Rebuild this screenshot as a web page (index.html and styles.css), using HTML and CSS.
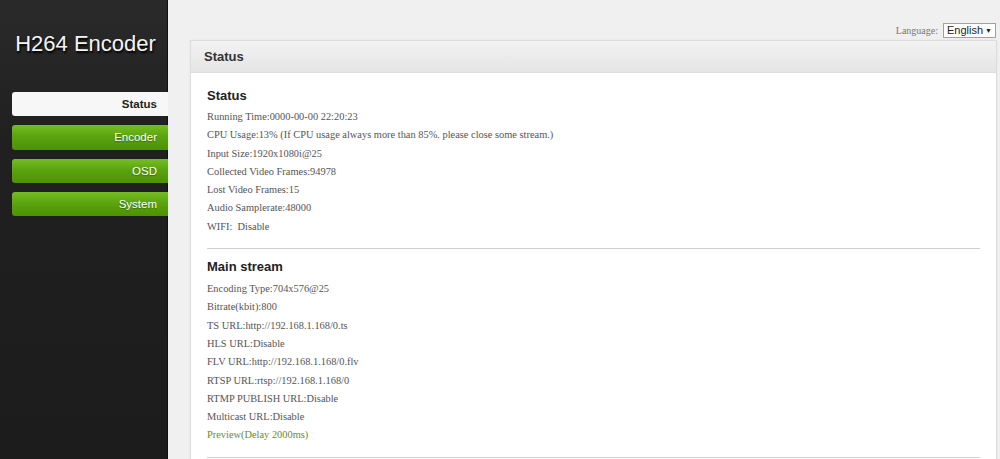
FILE: index.html
```html
<!DOCTYPE html>
<html lang="en">
<head>
  <meta charset="UTF-8" />
  <title>H264 Encoder</title>
  <link rel="stylesheet" href="styles.css">
</head>
<body>
  <div class="layout">
    <aside class="sidebar">
      <h1 class="brand">H264 Encoder</h1>
      <nav class="menu">
        <a class="menu-item active" href="#">Status</a>
        <a class="menu-item" href="#">Encoder</a>
        <a class="menu-item" href="#">OSD</a>
        <a class="menu-item" href="#">System</a>
      </nav>
    </aside>

    <main class="main">
      <div class="lang-bar">
        <span class="lang-label">Language:</span>
        <div class="lang-select">English <span class="arrow">&#9660;</span></div>
      </div>

      <section class="panel">
        <div class="panel-head">Status</div>
        <div class="panel-body">
          <h3>Status</h3>
          <p>Running Time:0000-00-00 22:20:23</p>
          <p>CPU Usage:13% (If CPU usage always more than 85%. please close some stream.)</p>
          <p>Input Size:1920x1080i@25</p>
          <p>Collected Video Frames:94978</p>
          <p>Lost Video Frames:15</p>
          <p>Audio Samplerate:48000</p>
          <p>WIFI: &nbsp;Disable</p>
          <hr>
          <h3>Main stream</h3>
          <p>Encoding Type:704x576@25</p>
          <p>Bitrate(kbit):800</p>
          <p>TS URL:http://192.168.1.168/0.ts</p>
          <p>HLS URL:Disable</p>
          <p>FLV URL:http://192.168.1.168/0.flv</p>
          <p>RTSP URL:rtsp://192.168.1.168/0</p>
          <p>RTMP PUBLISH URL:Disable</p>
          <p>Multicast URL:Disable</p>
          <p><a class="preview" href="#">Preview(Delay 2000ms)</a></p>
          <hr>
        </div>
      </section>
    </main>
  </div>
</body>
</html>
```
FILE: styles.css
```css
* {
  margin: 0;
  padding: 0;
  box-sizing: border-box;
}

html, body {
  height: 100%;
  overflow: hidden;
}

body {
  background: #f0f0f0;
  font-family: "Liberation Sans", Arial, sans-serif;
}

.layout {
  display: flex;
  min-height: 100%;
}

.sidebar {
  width: 168px;
  flex-shrink: 0;
  background: linear-gradient(#2a2a2a, #202020 30%, #1c1c1c);
  border-right: 1px solid #111;
  padding-top: 31px;
}

.brand {
  font-size: 22px;
  font-weight: normal;
  color: #f4f4f4;
  text-align: center;
  text-shadow: 1px 2px 2px #000;
  line-height: 26px;
  padding-left: 4px;
  margin-bottom: 35px;
}

.menu {
  display: flex;
  flex-direction: column;
  gap: 9px;
  padding-left: 12px;
}

.menu-item {
  display: block;
  height: 24.3px;
  line-height: 24px;
  text-align: right;
  padding-right: 11px;
  font-size: 11.5px;
  color: #fff;
  text-decoration: none;
  border-radius: 3px 0 0 3px;
  background: linear-gradient(#74bd22, #5aa20e 50%, #4d9205);
  text-shadow: 0 1px 1px #3a6a00;
  margin-right: -1px;
}

.menu-item.active {
  background: #f7f7f7;
  color: #222;
  font-weight: bold;
  text-shadow: none;
}

.main {
  flex: 1;
  padding: 22px 3px 0 22px;
}

.lang-bar {
  display: flex;
  justify-content: flex-end;
  align-items: center;
  gap: 5px;
  height: 16px;
  margin-bottom: 2px;
  padding-right: 1px;
}

.lang-label {
  font-family: "Liberation Serif", "Times New Roman", serif;
  font-size: 10px;
  color: #777;
}

.lang-select {
  display: flex;
  align-items: center;
  justify-content: space-between;
  width: 53px;
  height: 15px;
  border: 1px solid #a0a0a0;
  background: #fff;
  font-size: 11px;
  color: #222;
  padding: 0 3px 0 3px;
}

.lang-select .arrow {
  font-size: 7px;
}

.panel {
  background: #fff;
  border: 1px solid #dcdcdc;
  box-shadow: 0 0 2px rgba(0, 0, 0, 0.06);
}

.panel-head {
  height: 32px;
  line-height: 32px;
  padding-left: 13px;
  font-size: 13px;
  font-weight: bold;
  color: #333;
  background: linear-gradient(#f2f2f2, #e5e5e5);
  border-bottom: 1px solid #dedede;
}

.panel-body {
  padding: 15px 16px 0 16px;
}

.panel-body h3 {
  font-size: 13px;
  line-height: 16px;
  color: #222;
  margin-bottom: 4px;
}

.panel-body p {
  font-family: "Liberation Serif", "Times New Roman", serif;
  font-size: 10.4px;
  line-height: 18.3px;
  color: #555;
}

.panel-body hr {
  border: none;
  border-top: 1px solid #cfcfcf;
  margin: 12px 0 10px;
}

.panel-body hr + h3 {
  margin-bottom: 5px;
}

.preview {
  color: #6b8a2c;
  text-decoration: none;
}
```
